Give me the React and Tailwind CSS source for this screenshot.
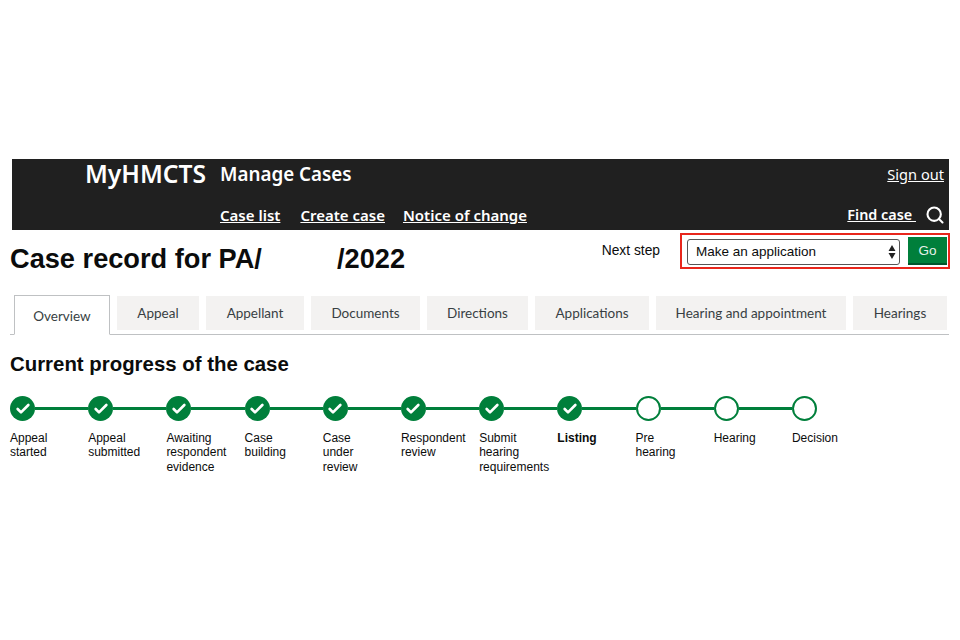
import { Search, Check } from "lucide-react";

const tabs = [
  { label: "Appeal", width: "w-[82px]" },
  { label: "Appellant", width: "w-[98px]" },
  { label: "Documents", width: "w-[109px]" },
  { label: "Directions", width: "w-[101px]" },
  { label: "Applications", width: "w-[114px]" },
  { label: "Hearing and appointment", width: "w-[190px]" },
  { label: "Hearings", width: "w-[94px]" },
];

const steps = [
  { lines: ["Appeal", "started"], done: true },
  { lines: ["Appeal", "submitted"], done: true },
  { lines: ["Awaiting", "respondent", "evidence"], done: true },
  { lines: ["Case", "building"], done: true },
  { lines: ["Case", "under", "review"], done: true },
  { lines: ["Respondent", "review"], done: true },
  { lines: ["Submit", "hearing", "requirements"], done: true },
  { lines: ["Listing"], done: true, current: true },
  { lines: ["Pre", "hearing"] },
  { lines: ["Hearing"] },
  { lines: ["Decision"] },
];

const App = () => {
  return (
    <div className="min-h-[640px] bg-white pt-[159px] font-['Liberation_Sans',sans-serif] text-[#0b0c0c]">
      {/* Header */}
      <div className="ml-3 flex h-[71px] w-[937px] flex-col justify-between bg-[#202020] pb-[5px] pl-[73px] pr-[5px] pt-[1px] font-['Noto_Sans',sans-serif] text-white">
        <div className="flex items-center">
          <span className="w-[135px] text-[24.6px] font-semibold leading-[28px]">MyHMCTS</span>
          <span className="text-[18.8px] font-semibold leading-[28px]">Manage Cases</span>
          <a className="ml-auto text-[14.6px] leading-[28px] underline">Sign out</a>
        </div>
        <div className="flex items-center pl-[135px] text-[15px] font-semibold leading-[20px]">
          <a className="underline">Case list</a>
          <a className="ml-[20px] underline">Create case</a>
          <a className="ml-[18px] underline">Notice of change</a>
          <a className="ml-auto text-[14.4px] underline">Find case&nbsp;</a>
          <Search size={20} strokeWidth={2.5} className="-mr-[1px] ml-[9px]" />
        </div>
      </div>

      {/* Title and next step */}
      <div className="flex h-[65px] items-start">
        <h1 className="ml-[10px] mt-[13px] flex text-[27.2px] font-bold leading-[32px]">
          <span className="w-[327px]">Case record for PA/</span>
          <span>/2022</span>
        </h1>
        <div className="ml-auto mr-[10px] mt-[3px] flex items-center">
          <span className="mr-[20px] pt-[1px] text-[13.8px]">Next step</span>
          <div className="flex h-[36px] w-[270px] items-center border-2 border-[#e8261c] pl-[5px] pr-[1px]">
            <div className="mt-[1px] flex h-[26px] w-[213px] shrink-0 items-center justify-between rounded-[3px] border border-[#555] pl-[8px] pr-[3px] text-[13.5px]">
              <span className="pt-[1px]">Make an application</span>
              <svg width="8" height="16" viewBox="0 0 8 16" fill="#222">
                <path d="M4 1 L7.5 7 H0.5 Z M4 15 L0.5 9 H7.5 Z" />
              </svg>
            </div>
            <button className="ml-[8px] h-[28px] w-[39px] shrink-0 border-b-2 border-[#00562c] bg-[#007f3b] pt-[2px] text-[13.5px] text-[#e6f2ea]">
              Go
            </button>
          </div>
        </div>
      </div>

      {/* Tabs */}
      <div className="ml-[10px] mr-[11px] flex h-[40px] items-start border-b border-[#bfc1c3] pl-[4px] font-['Lato',sans-serif] text-[13.5px] text-[#383f43]">
        <div className="mr-[7px] flex h-[40px] w-[96px] shrink-0 items-center justify-center border border-b-white border-[#bfc1c3] bg-white pt-[3px]">
          Overview
        </div>
        {tabs.map((tab) => (
          <div
            key={tab.label}
            className={`mr-[7px] mt-[1px] flex h-[34px] shrink-0 items-center justify-center bg-[#f3f2f1] ${tab.width}`}
          >
            {tab.label}
          </div>
        ))}
      </div>

      {/* Progress */}
      <h2 className="ml-[10px] mt-[16px] text-[20.4px] font-bold leading-[26px]">Current progress of the case</h2>
      <div className="ml-[10px] mt-[19px] flex">
        {steps.map((step, i) => (
          <div key={i} className="w-[78.2px] shrink-0">
            <div className="flex items-center">
              {step.done ? (
                <div className="flex h-[25px] w-[25px] shrink-0 items-center justify-center rounded-full bg-[#007f3b]">
                  <Check size={16} strokeWidth={4} className="text-white" />
                </div>
              ) : (
                <div className="h-[25px] w-[25px] shrink-0 rounded-full border-2 border-[#007f3b] bg-white" />
              )}
              {i < steps.length - 1 && <div className="h-[3px] flex-1 bg-[#007f3b]" />}
            </div>
            <div className={`mt-[10px] text-[12px] leading-[14.4px] ${step.current ? "font-bold" : ""}`}>
              {step.lines.map((line) => (
                <div key={line} className="whitespace-nowrap">{line}</div>
              ))}
            </div>
          </div>
        ))}
      </div>
    </div>
  );
};

export default App;
